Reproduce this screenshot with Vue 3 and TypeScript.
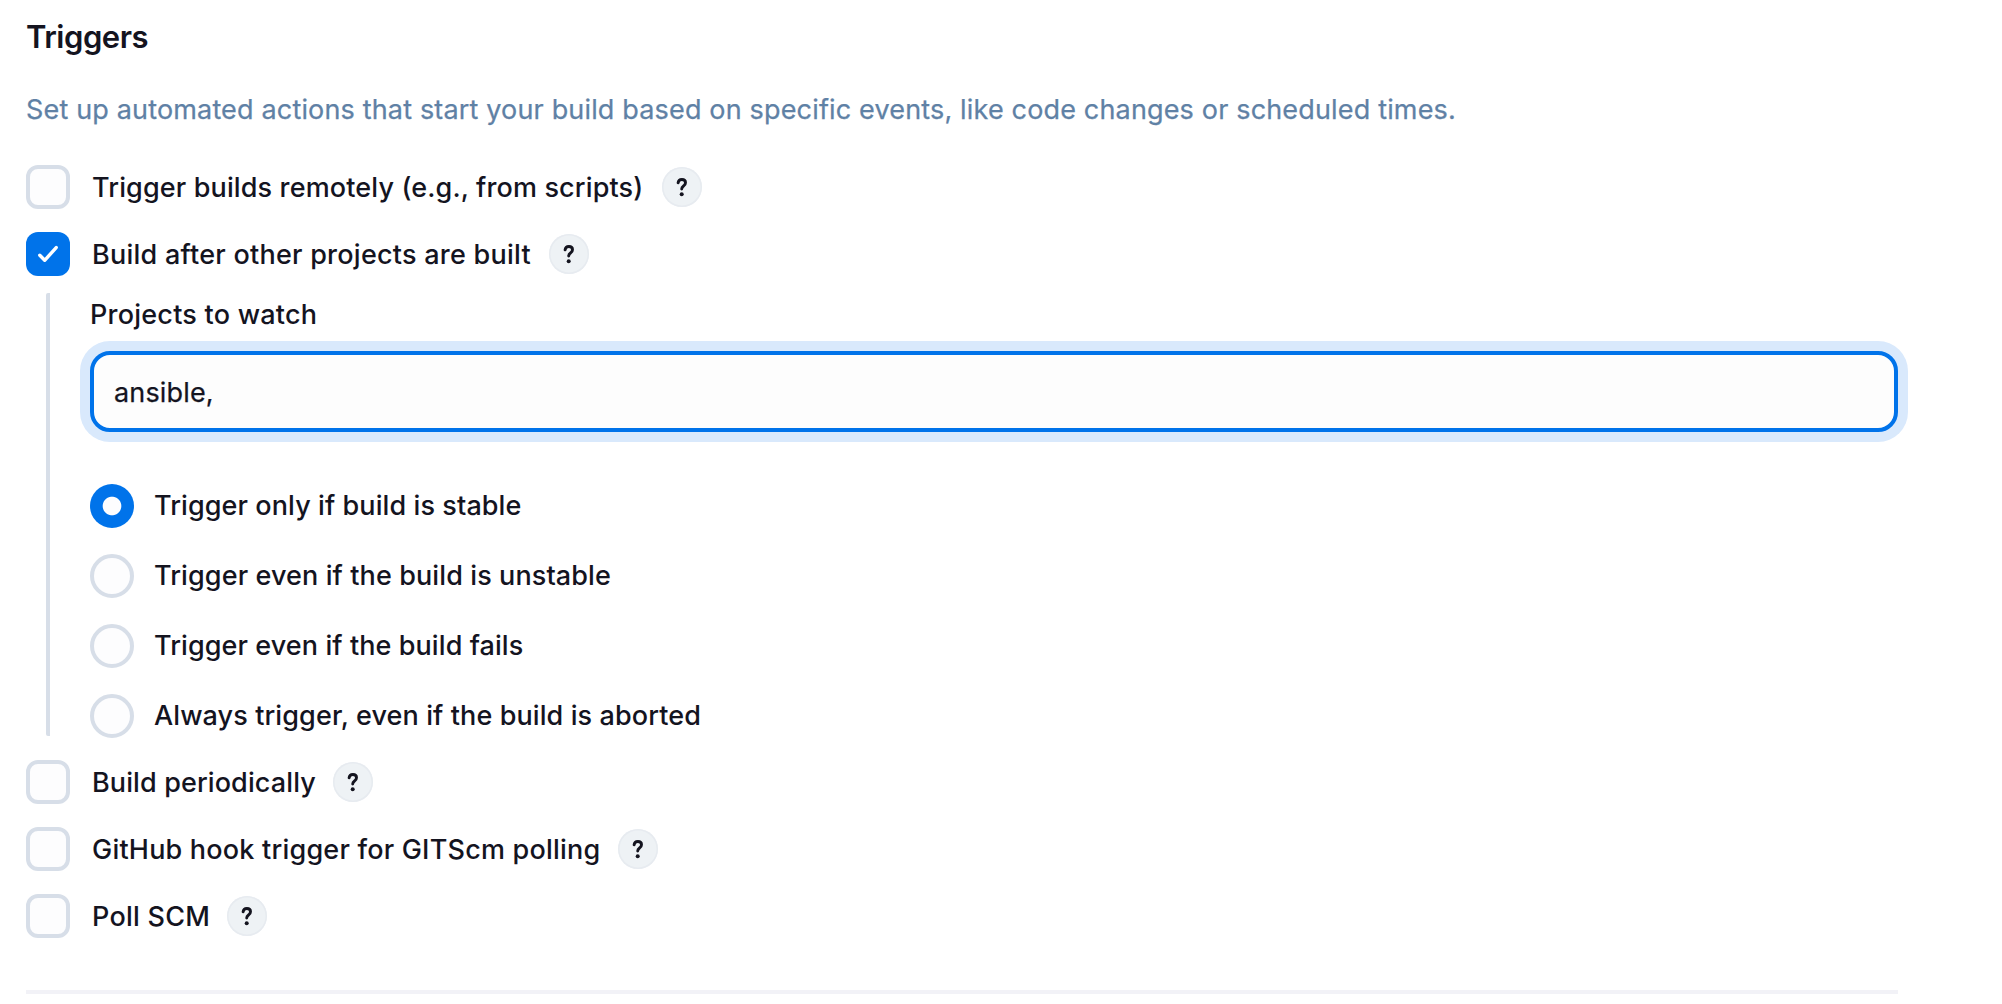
<script setup lang="ts">
import { ref } from 'vue'

interface Option {
  label: string
  tracking: number
}

interface Trigger extends Option {
  checked: boolean
  width: number
}

const before = ref<Trigger[]>([
  { label: 'Trigger builds remotely (e.g., from scripts)', tracking: 0.133, checked: false, width: 570 },
  { label: 'Build after other projects are built', tracking: 0.246, checked: true, width: 457 },
])

const after = ref<Trigger[]>([
  { label: 'Build periodically', tracking: 0.11, checked: false, width: 241 },
  { label: 'GitHub hook trigger for GITScm polling', tracking: 0.205, checked: false, width: 526 },
  { label: 'Poll SCM', tracking: 0.25, checked: false, width: 135 },
])

const groups = [before, after]

const conditions: Option[] = [
  { label: 'Trigger only if build is stable', tracking: 0.09 },
  { label: 'Trigger even if the build is unstable', tracking: 0.106 },
  { label: 'Trigger even if the build fails', tracking: 0.085 },
  { label: 'Always trigger, even if the build is aborted', tracking: 0.1 },
]

const projects = ref('ansible,')
const selected = ref(0)
</script>

<template>
  <main class="page">
    <h2 class="title">Triggers</h2>
    <p class="description">
      Set up automated actions that start your build based on specific events, like code changes or scheduled times.
    </p>

    <template v-for="(group, g) in groups" :key="g">
      <div class="group">
        <div v-for="item in group.value" :key="item.label" class="row">
          <label class="option">
            <input v-model="item.checked" type="checkbox" class="native" />
            <span class="box" :class="{ on: item.checked }">
              <svg v-if="item.checked" width="44" height="44" viewBox="0 0 44 44" fill="none">
                <path d="M13.8 23.3L18.7 28.3L30.2 15.6" stroke="#fff" stroke-width="3.4" stroke-linecap="round" stroke-linejoin="round" />
              </svg>
            </span>
            <span class="text" :style="{ letterSpacing: item.tracking + 'px', width: item.width + 'px' }">{{ item.label }}</span>
          </label>
          <button class="help" type="button" aria-label="Help">
            <svg width="40" height="40" viewBox="0 0 40 40" fill="none">
              <path d="M16.1 15.9C16.3 13.8 17.7 12.5 19.9 12.5C22.1 12.5 23.5 13.8 23.5 15.7C23.5 17.2 22.8 18.1 21.5 19C20.2 19.9 19.7 20.6 19.7 22.1" stroke="#14141f" stroke-width="2.9" stroke-linecap="round" stroke-linejoin="round" />
              <circle cx="19.7" cy="27.2" r="2" fill="#14141f" />
            </svg>
          </button>
        </div>
      </div>

      <section v-if="g === 0" class="nested">
        <label class="field-label" for="projects">Projects to watch</label>
        <input id="projects" v-model="projects" class="field" type="text" spellcheck="false" />
        <div class="radios">
          <label v-for="(c, i) in conditions" :key="c.label" class="radio-row">
            <input v-model="selected" type="radio" name="condition" :value="i" class="native" />
            <span class="radio" :class="{ on: selected === i }"></span>
            <span class="radio-text" :style="{ letterSpacing: c.tracking + 'px' }">{{ c.label }}</span>
          </label>
        </div>
      </section>
    </template>

    <hr class="divider" />
  </main>
</template>

<style>
body {
  margin: 0;
  background: #fff;
}
</style>

<style scoped>
.page {
  box-sizing: border-box;
  width: 2002px;
  height: 1004px;
  padding: 15px 104px 0 26px;
  overflow: hidden;
  color: #14141f;
  font-family: Inter, sans-serif;
  font-size: 27px;
  font-weight: 450;
  white-space: nowrap;
}

.title {
  margin: 0;
  font-size: 31px;
  font-weight: 600;
  line-height: 44px;
  letter-spacing: -0.478px;
}

.description {
  margin: 29px 0 33px;
  color: #5f81a5;
  font-weight: 400;
  line-height: 44px;
  letter-spacing: 0.162px;
  -webkit-text-stroke: 0.25px #5f81a5;
}

.group {
  display: flex;
  flex-direction: column;
  gap: 23px;
}

.row,
.option,
.radio-row {
  display: flex;
}

.row {
  align-items: center;
  height: 44px;
}

.native {
  display: none;
}

.box,
.radio {
  box-sizing: border-box;
  flex: none;
  width: 44px;
  height: 44px;
  border: 4px solid #d7dee8;
  background: #fdfdfe;
}

.box {
  border-radius: 12px;
}

.box.on {
  border: 0;
  background: #0073ea;
}

.box svg,
.help svg {
  display: block;
}

.text {
  height: 44px;
  margin-left: 22px;
  line-height: 46px;
}

.help {
  flex: none;
  width: 40px;
  height: 40px;
  padding: 0;
  border: 0;
  border-radius: 50%;
  background: #eef2f5;
  box-shadow: inset 0 0 0 1.5px #e7ebf0;
}

.nested {
  display: flex;
  flex-direction: column;
  box-sizing: border-box;
  height: 443px;
  margin: 17px 0 24px 20px;
  padding: 6px 0 0 44px;
  background: linear-gradient(#d7dee8, #d7dee8) no-repeat left top / 4px 100%;
  border-radius: 2px;
}

.field-label {
  flex: none;
  line-height: 32px;
  letter-spacing: 0.23px;
}

.field {
  box-sizing: border-box;
  flex: none;
  width: 100%;
  height: 81px;
  margin: 20px 0 52px;
  padding: 1px 20px 0;
  border: 4px solid #0073ea;
  border-radius: 20px;
  outline: 0;
  background: #fdfdfd;
  box-shadow: 0 0 0 10px #d9e9fc;
  color: inherit;
  font: 400 27px Inter, sans-serif;
  letter-spacing: 0.15px;
  -webkit-text-stroke: 0.25px #14141f;
}

.radios {
  display: flex;
  flex-direction: column;
  gap: 26px;
}

.radio-row {
  height: 44px;
}

.radio {
  border-radius: 50%;
}

.radio.on {
  border: 0;
  background: radial-gradient(circle, #fdfdfe 8.8px, #0073ea 9.8px);
}

.radio-text {
  margin-left: 20px;
  line-height: 44px;
}

.divider {
  height: 4px;
  margin: 52px 0 0;
  border: 0;
  background: #f2f2f7;
}
</style>
